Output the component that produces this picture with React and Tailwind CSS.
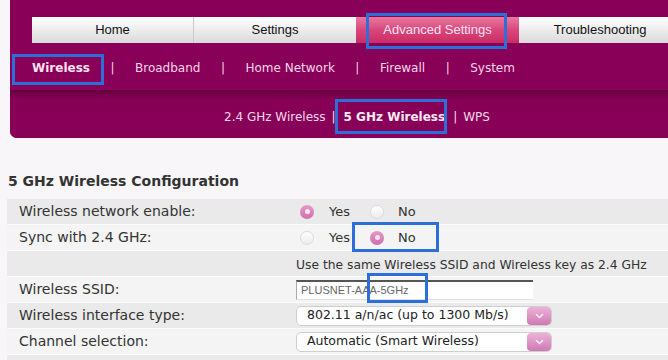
import React from 'react';

// router admin page: 5 GHz wireless config, with blue annotation boxes on top
const tabs = ['Home', 'Settings', 'Advanced Settings', 'Troubleshooting'];
const subNav = ['Wireless', 'Broadband', 'Home Network', 'Firewall', 'System'];

function Radio({ on }) {
  if (on) {
    return (
      <span className="w-[14px] h-[14px] rounded-full bg-gradient-to-b from-[#e39ac8] to-[#cf6fae] flex items-center justify-center shrink-0">
        <span className="w-[5px] h-[5px] rounded-full bg-[#f7e4f0]" />
      </span>
    );
  }
  return (
    <span className="block w-[14px] h-[14px] rounded-full border border-[#dcdcdc] bg-gradient-to-b from-[#ffffff] to-[#ececec] shrink-0" />
  );
}

function YesNo({ yes }) {
  return (
    <div className="flex items-center pl-[4px] text-[13px]">
      <Radio on={yes} />
      <span className="ml-[15px] w-[26px]">Yes</span>
      <span className="ml-[15px] flex"><Radio on={!yes} /></span>
      <span className="ml-[14px]">No</span>
    </div>
  );
}

function Select({ value }) {
  return (
    <div className="w-[256px] h-[20px] flex items-center rounded-[5px] border border-[#cfcfcf] bg-white overflow-hidden">
      <span className="flex-1 pl-[10px] text-[12.5px] leading-none text-[#222]">{value}</span>
      <span className="w-[24px] h-full rounded-[4px] bg-gradient-to-b from-[#ebb3d8] to-[#cf78b3] flex items-center justify-center">
        <svg width="9" height="6" viewBox="0 0 9 6">
          <path d="M1 1.2 L4.5 4.5 L8 1.2" fill="none" stroke="#fbe9f4" strokeWidth="1.6" />
        </svg>
      </span>
    </div>
  );
}

function Row({ label, shade, children }) {
  return (
    <div className={`grid grid-cols-[289px_1fr] h-[26px] items-center border-b border-[#fbfbfb] ${shade ? 'bg-[#eaeaea]' : 'bg-[#f4f4f4]'}`}>
      <div className="pl-[12px] text-[14px]">{label}</div>
      <div>{children}</div>
    </div>
  );
}

function Mark({ className }) {
  return <div className={`absolute border-[3px] border-[#2d6fd9] pointer-events-none ${className}`} />;
}

export default function App() {
  return (
    <div className="relative w-[668px] h-[360px] overflow-hidden bg-[#f8f6f8] text-[#333]" style={{ fontFamily: '"DejaVu Sans", Verdana, sans-serif' }}>
      {/* magenta header */}
      <div className="ml-[10px] h-[138px] bg-[#890058] rounded-bl-[7px] overflow-hidden flex flex-col">
        <div className="h-[90px] pt-[17px]">
          <div className="ml-[22px] flex h-[26px] text-[13px]" style={{ fontFamily: '"Liberation Sans", Arial, sans-serif' }}>
            {tabs.map((t, i) =>
              i === 2 ? (
                <div key={t} className="w-[163px] shrink-0 flex items-center justify-center bg-gradient-to-b from-[#e8789f] via-[#d9467c] to-[#c92c66] text-[#fbe3ee]">
                  {t}
                </div>
              ) : (
                <div key={t} className={`w-[162px] shrink-0 flex items-center justify-center bg-gradient-to-b from-[#ffffff] to-[#dadada] text-[#111] ${i === 0 ? 'border-r border-[#c9c9c9]' : ''}`}>
                  {t}
                </div>
              )
            )}
          </div>
          <div className="mt-[15px] ml-[22px] flex items-center gap-[20.5px] text-[12px] text-[#f6d6e8] h-[20px]">
            {subNav.map((s, i) => (
              <React.Fragment key={s}>
                {i > 0 && <span className="text-[#f3cfe3]">|</span>}
                <span className={i === 0 ? 'font-bold text-[#fbe4f1]' : ''}>{s}</span>
              </React.Fragment>
            ))}
          </div>
        </div>
        <div className="flex-1 bg-gradient-to-b from-[#660040] via-[#860056] via-20% to-[#890058] flex items-center pl-[214px] gap-[6px] text-[12px] text-[#f6d9ea] pt-[6px]">
          <span>2.4 GHz Wireless</span>
          <span>|</span>
          <span className="font-bold text-[#fcebf4] ml-[2px]">5 GHz Wireless</span>
          <span className="ml-[2px]">|</span>
          <span>WPS</span>
        </div>
      </div>

      {/* config */}
      <div className="pl-[8px] pt-[33px] h-[20px] box-content text-[14px] leading-[20px] font-bold text-[#333]">
        5 GHz Wireless Configuration
      </div>
      <div className="ml-[7px] mt-[8px] text-[#333]">
        <Row label="Wireless network enable:" shade>
          <YesNo yes />
        </Row>
        <Row label="Sync with 2.4 GHz:">
          <YesNo yes={false} />
        </Row>
        <Row label="" shade>
          <span className="text-[12.3px]">Use the same Wireless SSID and Wireless key as 2.4 GHz</span>
        </Row>
        <Row label="Wireless SSID:">
          <div className="w-[237px] h-[20px] bg-white border-t-2 border-t-[#555] border-l border-l-[#aaa] border-b border-b-[#e2e2e2] pl-[4px] flex items-center text-[11px] text-[#666]" style={{ fontFamily: '"Liberation Sans", Arial, sans-serif' }}>
            PLUSNET-AAA-5GHz
          </div>
        </Row>
        <Row label="Wireless interface type:" shade>
          <Select value="802.11 a/n/ac (up to 1300 Mb/s)" />
        </Row>
        <Row label="Channel selection:">
          <Select value="Automatic (Smart Wireless)" />
        </Row>
        <Row label="" shade />
      </div>

      {/* annotation boxes */}
      <Mark className="left-[366px] top-[13px] w-[141px] h-[36px]" />
      <Mark className="left-[12px] top-[54px] w-[92px] h-[31px]" />
      <Mark className="left-[335px] top-[99px] w-[112px] h-[35px]" />
      <Mark className="left-[352px] top-[222px] w-[87px] h-[30px]" />
      <Mark className="left-[367px] top-[273px] w-[61px] h-[30px]" />
    </div>
  );
}
